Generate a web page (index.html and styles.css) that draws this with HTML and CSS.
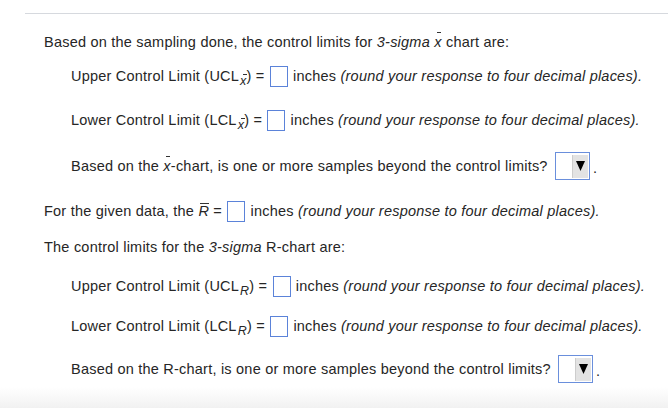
FILE: index.html
```html
<!DOCTYPE html>
<html>
<head>
<meta charset="utf-8">
<link rel="stylesheet" href="styles.css">
</head>
<body>
<div class="page">
  <div class="rule"></div>
  <p class="line first">Based on the sampling done, the control limits for&nbsp;<i>3-sigma</i>&nbsp;<span class="xbar">x</span>&nbsp;chart are:</p>
  <p class="line indent g10">Upper Control Limit (UCL<span class="sub"><span class="xbar">x</span></span>) =&nbsp;<span class="box"></span>&nbsp;inches&nbsp;<i>(round your response to four decimal places).</i></p>
  <p class="line indent g20">Lower Control Limit (LCL<span class="sub"><span class="xbar">x</span></span>) =&nbsp;<span class="box"></span>&nbsp;inches&nbsp;<i>(round your response to four decimal places).</i></p>
  <p class="line indent g22">Based on the&nbsp;<span class="xbar">x</span>-chart, is one or more samples beyond the control limits?&nbsp;<span class="select"><span class="arrow"><svg width="9" height="10" viewBox="0 0 9 10"><polygon points="0,0 9,0 4.5,10" fill="#000"/></svg></span></span><span class="dot">.</span></p>
  <p class="line g21">For the given data, the&nbsp;<span class="rbar">R</span>&nbsp;=&nbsp;<span class="box"></span>&nbsp;inches&nbsp;<i>(round your response to four decimal places).</i></p>
  <p class="line g12">The control limits for the&nbsp;<i>3-sigma</i>&nbsp;R-chart are:</p>
  <p class="line indent g15">Upper Control Limit (UCL<span class="sub"><i>R</i></span>) =&nbsp;<span class="box"></span>&nbsp;inches&nbsp;<i>(round your response to four decimal places).</i></p>
  <p class="line indent g16">Lower Control Limit (LCL<span class="sub"><i>R</i></span>) =&nbsp;<span class="box"></span>&nbsp;inches&nbsp;<i>(round your response to four decimal places).</i></p>
  <p class="line indent g19">Based on the R-chart, is one or more samples beyond the control limits?&nbsp;<span class="select"><span class="arrow"><svg width="9" height="10" viewBox="0 0 9 10"><polygon points="0,0 9,0 4.5,10" fill="#000"/></svg></span></span><span class="dot">.</span></p>
  <div class="footer"></div>
</div>
</body>
</html>
```

FILE: styles.css
```css
html, body {
  margin: 0;
  padding: 0;
  background: #ffffff;
}
.page {
  width: 668px;
  height: 408px;
  overflow: hidden;
  display: flex;
  flex-direction: column;
  font-family: "Liberation Sans", Arial, sans-serif;
  font-size: 14.5px;
  letter-spacing: 0.22px;
  color: #262626;
}
.rule {
  margin: 13px 0 0 25px;
  height: 1px;
  background: #d6d9de;
  flex: none;
}
.line {
  margin: 0;
  height: 24px;
  display: flex;
  align-items: center;
  padding-left: 44px;
  white-space: nowrap;
  flex: none;
}
.line.first { margin-top: 16px; }
.line.indent { padding-left: 71px; }
.g10 { margin-top: 10px !important; }
.g12 { margin-top: 12px !important; }
.g15 { margin-top: 15px !important; }
.g16 { margin-top: 16px !important; }
.g19 { margin-top: 19px !important; }
.g20 { margin-top: 20px !important; }
.g21 { margin-top: 21px !important; }
.g22 { margin-top: 22px !important; }

.xbar {
  position: relative;
  display: inline-block;
  font-style: italic;
}
.xbar::before {
  content: "";
  position: absolute;
  left: 3px;
  top: -2px;
  width: 4px;
  height: 1px;
  background: #333;
}
.rbar {
  position: relative;
  display: inline-block;
  font-style: italic;
}
.rbar::before {
  content: "";
  position: absolute;
  left: 2px;
  right: 0;
  top: 0;
  height: 1px;
  background: #333;
}
.sub {
  display: inline-block;
  font-size: 12.5px;
  position: relative;
  top: 5px;
  margin-left: 1px;
}
.sub .xbar::before {
  left: 3px;
  top: 0px;
  width: 4px;
}
.box {
  display: inline-block;
  width: 16px;
  height: 19px;
  border: 1px solid #5b83d9;
  background: #fff;
  box-sizing: content-box;
  margin: 0 1px;
}
.select {
  display: inline-flex;
  justify-content: flex-end;
  align-items: center;
  width: 32px;
  height: 26px;
  border: 1px solid #6a8fdc;
  padding-right: 1px;
  background: #fff;
  margin-left: 3px;
}
.arrow {
  display: flex;
  align-items: center;
  justify-content: center;
  width: 15px;
  height: 23px;
  background: #e3e3e3;
  border-left: 1px solid #cdcdcd;
}
.dot {
  margin-left: 3px;
  align-self: flex-end;
  padding-bottom: 2px;
}
.footer {
  flex: 1;
  margin-top: 6px;
  background: linear-gradient(to bottom, #ffffff 0px, #f6f6f6 14px, #f1f1f1 100%);
}
```
